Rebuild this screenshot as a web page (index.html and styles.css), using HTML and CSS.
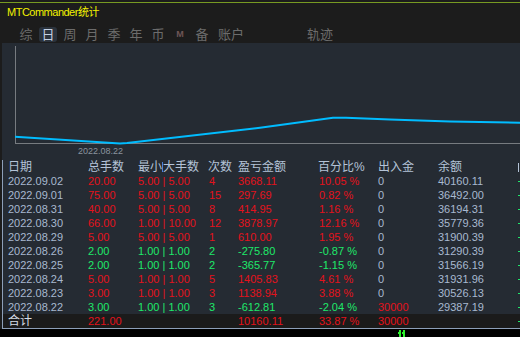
FILE: index.html
```html
<!DOCTYPE html>
<html>
<head>
<meta charset="utf-8">
<link rel="stylesheet" href="styles.css">
</head>
<body>
<div class="app">
  <div class="topline"></div>
  <div class="title">MTCommander统计</div>
  <div class="tabs">
    <span class="tab">综</span>
    <span class="tab sel">日</span>
    <span class="tab">周</span>
    <span class="tab">月</span>
    <span class="tab">季</span>
    <span class="tab">年</span>
    <span class="tab">币</span>
    <span class="tab m">M</span>
    <span class="tab">备</span>
    <span class="tab wide">账户</span>
    <span class="tab wide far">轨迹</span>
  </div>
  <div class="panel">
    <div class="chart">
      <svg width="518" height="117" viewBox="2 43 518 117">
        <line class="axis" x1="15.5" y1="46" x2="15.5" y2="143.5"/>
        <line class="axis" x1="15" y1="143.5" x2="520" y2="143.5"/>
        <polyline class="equity" points="15,136.7 120,143.5 127,143 260,127.7 333,117.7 346,117.7 390,119.6 450,121.6 520,122.7"/>
        <text class="lbl" x="78" y="153.5">2022.08.22</text>
      </svg>
    </div>
    <div class="table">
      <div class="row head"><span>日期</span><span>总手数</span><span>最小<i class="caret"></i>大手数</span><span>次数</span><span>盈亏金额</span><span>百分比%</span><span>出入金</span><span>余额</span><i class="edge hd"></i></div>
      <div class="row up"><span class="n">2022.09.02</span><span>20.00</span><span>5.00 | 5.00</span><span class="c">4</span><span>3668.11</span><span class="c">10.05 %</span><span class="n">0</span><span class="n">40160.11</span><i class="edge"></i></div>
      <div class="row up"><span class="n">2022.09.01</span><span>75.00</span><span>5.00 | 5.00</span><span class="c">15</span><span>297.69</span><span class="c">0.82 %</span><span class="n">0</span><span class="n">36492.00</span><i class="edge"></i></div>
      <div class="row up"><span class="n">2022.08.31</span><span>40.00</span><span>5.00 | 5.00</span><span class="c">8</span><span>414.95</span><span class="c">1.16 %</span><span class="n">0</span><span class="n">36194.31</span><i class="edge"></i></div>
      <div class="row up"><span class="n">2022.08.30</span><span>66.00</span><span>1.00 | 10.00</span><span class="c">12</span><span>3878.97</span><span class="c">12.16 %</span><span class="n">0</span><span class="n">35779.36</span><i class="edge"></i></div>
      <div class="row up"><span class="n">2022.08.29</span><span>5.00</span><span>5.00 | 5.00</span><span class="c">1</span><span>610.00</span><span class="c">1.95 %</span><span class="n">0</span><span class="n">31900.39</span><i class="edge"></i></div>
      <div class="row dn"><span class="n">2022.08.26</span><span>2.00</span><span>1.00 | 1.00</span><span class="c">2</span><span>-275.80</span><span class="c">-0.87 %</span><span class="n">0</span><span class="n">31290.39</span><i class="edge"></i></div>
      <div class="row dn"><span class="n">2022.08.25</span><span>2.00</span><span>1.00 | 1.00</span><span class="c">2</span><span>-365.77</span><span class="c">-1.15 %</span><span class="n">0</span><span class="n">31566.19</span><i class="edge"></i></div>
      <div class="row up"><span class="n">2022.08.24</span><span>5.00</span><span>1.00 | 1.00</span><span class="c">5</span><span>1405.83</span><span class="c">4.61 %</span><span class="n">0</span><span class="n">31931.96</span><i class="edge"></i></div>
      <div class="row up"><span class="n">2022.08.23</span><span>3.00</span><span>1.00 | 1.00</span><span class="c">3</span><span>1138.94</span><span class="c">3.88 %</span><span class="n">0</span><span class="n">30526.13</span><i class="edge"></i></div>
      <div class="row dn"><span class="n">2022.08.22</span><span>3.00</span><span>1.00 | 1.00</span><span class="c">3</span><span>-612.81</span><span class="c">-2.04 %</span><span class="r">30000</span><span class="n">29387.19</span><i class="edge"></i></div>
      <div class="row up total"><span class="t">合计</span><span>221.00</span><span></span><span></span><span>10160.11</span><span class="c">33.87 %</span><span class="r">30000</span><span></span><i class="edge"></i></div>
    </div>
  </div>
  <div class="status">
    <svg class="mark" width="8" height="8" viewBox="0 0 8 8">
      <rect x="1" y="1" width="2" height="7"/>
      <rect x="5" y="1" width="2" height="7"/>
      <rect x="0" y="3" width="1" height="2"/>
      <rect x="4" y="3" width="1" height="2"/>
    </svg>
  </div>
</div>
</body>
</html>
```

FILE: styles.css
```css
html, body {
  margin: 0;
  padding: 0;
}
body {
  width: 520px;
  height: 337px;
  overflow: hidden;
  background: #1c1c1c;
  font-family: "Liberation Sans", "Noto Sans CJK SC", sans-serif;
}
.app {
  display: flex;
  flex-direction: column;
  width: 520px;
  height: 337px;
}
.topline {
  height: 1px;
  margin-top: 2px;
  background: #779a22;
}
.title {
  margin-top: 2px;
  height: 14px;
  line-height: 14px;
  padding-left: 7px;
  font-size: 11px;
  letter-spacing: -0.5px;
  color: #f2f200;
}
.tabs {
  display: flex;
  gap: 4px;
  margin-top: 8px;
  margin-bottom: 1px;
  padding-left: 17px;
  height: 15px;
}
.tab {
  width: 18px;
  height: 15px;
  line-height: 15px;
  text-align: center;
  font-size: 13px;
  color: #6c6c6c;
  border-radius: 3px;
}
.tab.sel {
  background: #2b333d;
  color: #c3d0e2;
}
.tab.m {
  font-size: 9px;
  font-weight: bold;
  color: #6e5656;
}
.tab.wide {
  width: auto;
  padding: 0 3px;
}
.tab.far {
  margin-left: 53px;
}
.panel {
  margin-left: 2px;
  background: #252b33;
  display: flex;
  flex-direction: column;
  overflow: hidden;
}
.chart {
  height: 117px;
}
.chart svg {
  display: block;
}
.axis {
  stroke: #777b80;
  stroke-width: 1;
}
.equity {
  fill: none;
  stroke: #00bcff;
  stroke-width: 2;
}
.lbl {
  font-family: "Liberation Sans", sans-serif;
  font-size: 9px;
  fill: #8a939e;
}
.table {
  border-left: 1px solid #8d9fb8;
  border-bottom: 1px solid #8d9fb8;
  padding-left: 5px;
}
.row {
  display: grid;
  grid-template-columns: 80px 50px 70px 30px 80px 60px 60px 80px 2px;
  align-items: center;
  height: 14px;
  line-height: 14px;
  font-size: 11px;
  white-space: nowrap;
}
.row.head {
  font-size: 12px;
  color: #b4c3d7;
}
.caret {
  display: inline-block;
  width: 1px;
  height: 10px;
  background: #4c82d8;
  vertical-align: -1px;
}
.edge {
  display: block;
  width: 2px;
  height: 1px;
  background: #1ee86a;
}
.edge.hd {
  width: 1px;
  height: 9px;
  background: #b4c3d7;
}
.row.up {
  color: #e3121c;
}
.row.dn {
  color: #1ee86a;
}
.row .c {
  padding-left: 1px;
}
.row .n {
  color: #a8b9d0;
}
.row .r {
  color: #e3121c;
}
.row.total {
  background: #1b1b1b;
  margin-left: -5px;
  padding-left: 5px;
}
.row .t {
  font-size: 12px;
  color: #d4dbe4;
}
.status {
  flex: 1;
  background: #000;
  position: relative;
}
.mark {
  position: absolute;
  left: 398px;
  top: 0;
  fill: #2cf02c;
}
```
